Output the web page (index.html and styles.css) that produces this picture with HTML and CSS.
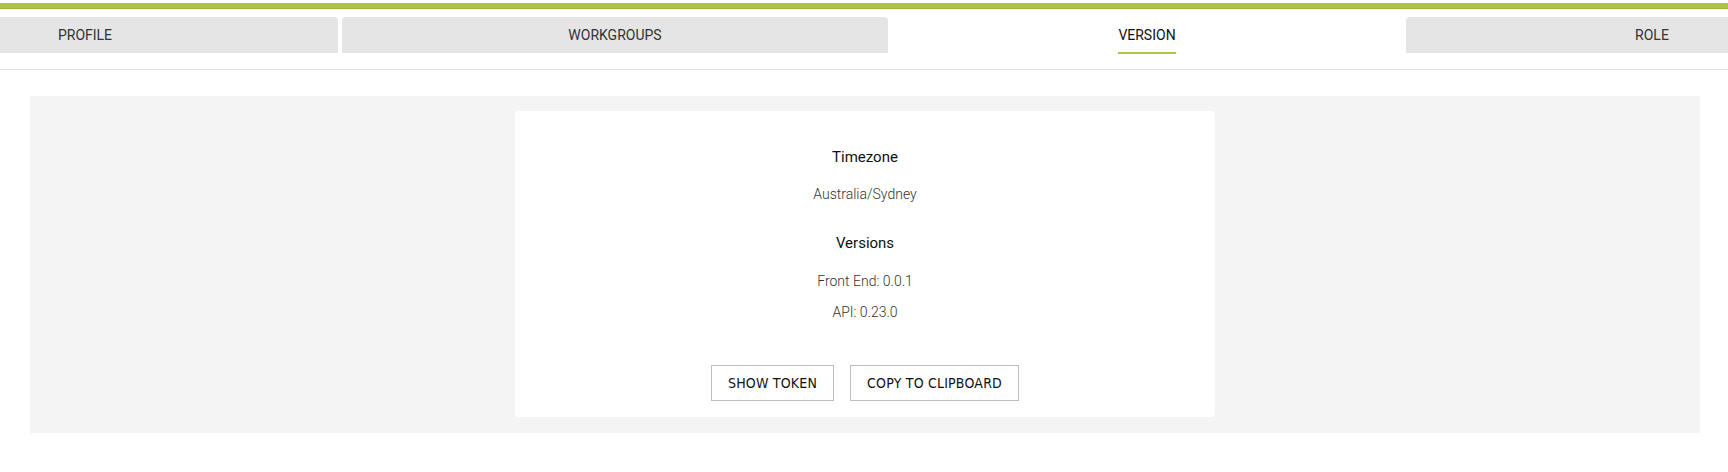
FILE: index.html
```html
<!DOCTYPE html>
<html lang="en">

<head>
    <meta charset="UTF-8">
    <meta name="viewport" content="width=device-width, initial-scale=1.0">
    <title>Version</title>
    <link rel="stylesheet" href="styles.css">
</head>

<body>
    <div class="topbar"></div>

    <nav class="tab-strip">
        <div class="tabs">
            <a class="tab tab-profile">PROFILE</a>
            <a class="tab tab-workgroups">WORKGROUPS</a>
            <a class="tab tab-version active"><span>VERSION</span></a>
            <a class="tab tab-role">ROLE</a>
        </div>
    </nav>

    <main class="panel">
        <div class="card">
            <h4>Timezone</h4>
            <p class="tz">Australia/Sydney</p>

            <h4 class="versions">Versions</h4>
            <p class="front">Front End: 0.0.1</p>
            <p class="api">API: 0.23.0</p>

            <div class="actions">
                <button type="button">SHOW TOKEN</button>
                <button type="button">COPY TO CLIPBOARD</button>
            </div>
        </div>
    </main>
</body>

</html>
```

FILE: styles.css
```css
html, body {
    overflow: hidden;
}

body {
    margin: 0;
    padding: 0;
    background: #ffffff;
    font-family: Roboto, "Noto Sans", sans-serif;
    color: #333;
}

.topbar {
    margin-top: 3px;
    height: 6px;
    background-color: #afc444;
    border-bottom: 1px solid #9fb43a;
    box-sizing: border-box;
}

.tab-strip {
    margin-top: 8px;
    padding-bottom: 16px;
    border-bottom: 1px solid #e2e2e2;
    overflow: hidden;
}

.tabs {
    display: flex;
    gap: 4px;
    width: 2066px;
    margin-left: -168px;
}

.tab {
    flex: 0 0 auto;
    height: 36px;
    line-height: 36px;
    text-align: center;
    font-size: 14px;
    color: #333;
    background-color: #e5e5e5;
    border-radius: 4px 4px 0 0;
    cursor: pointer;
}

.tab-profile { width: 506px; }
.tab-workgroups { width: 546px; }
.tab-version { width: 510px; }
.tab-role { width: 492px; }

.tab.active {
    background-color: #ffffff;
    color: #111;
}

.tab.active span {
    display: inline-block;
    line-height: 34px;
    border-bottom: 2px solid #afc444;
}

.panel {
    margin: 26px 28px 0 30px;
    padding: 15px 0 16px;
    background-color: #f4f4f4;
    display: flex;
    justify-content: center;
}

.card {
    width: 700px;
    background-color: #ffffff;
    border-radius: 4px;
    padding: 36px 0 16px;
    text-align: center;
}

.card h4 {
    margin: 0;
    font-size: 15px;
    font-weight: 400;
    line-height: 20px;
    color: #111;
}

.card p {
    margin: 0;
    font-size: 14px;
    font-weight: 300;
    line-height: 20px;
    color: #333;
}

.card .tz {
    margin-top: 17px;
}

.card .versions {
    margin-top: 29px;
}

.card .front {
    margin-top: 18px;
}

.card .api {
    margin-top: 11px;
}

.actions {
    margin-top: 43px;
    display: flex;
    justify-content: center;
    gap: 16px;
}

.actions button {
    height: 36px;
    padding: 0 16px;
    background-color: #ffffff;
    border: 1px solid #bdbdbd;
    font-family: "DejaVu Sans Condensed", Roboto, sans-serif;
    font-size: 14px;
    letter-spacing: 0.2px;
    color: #111;
    cursor: pointer;
}
```
